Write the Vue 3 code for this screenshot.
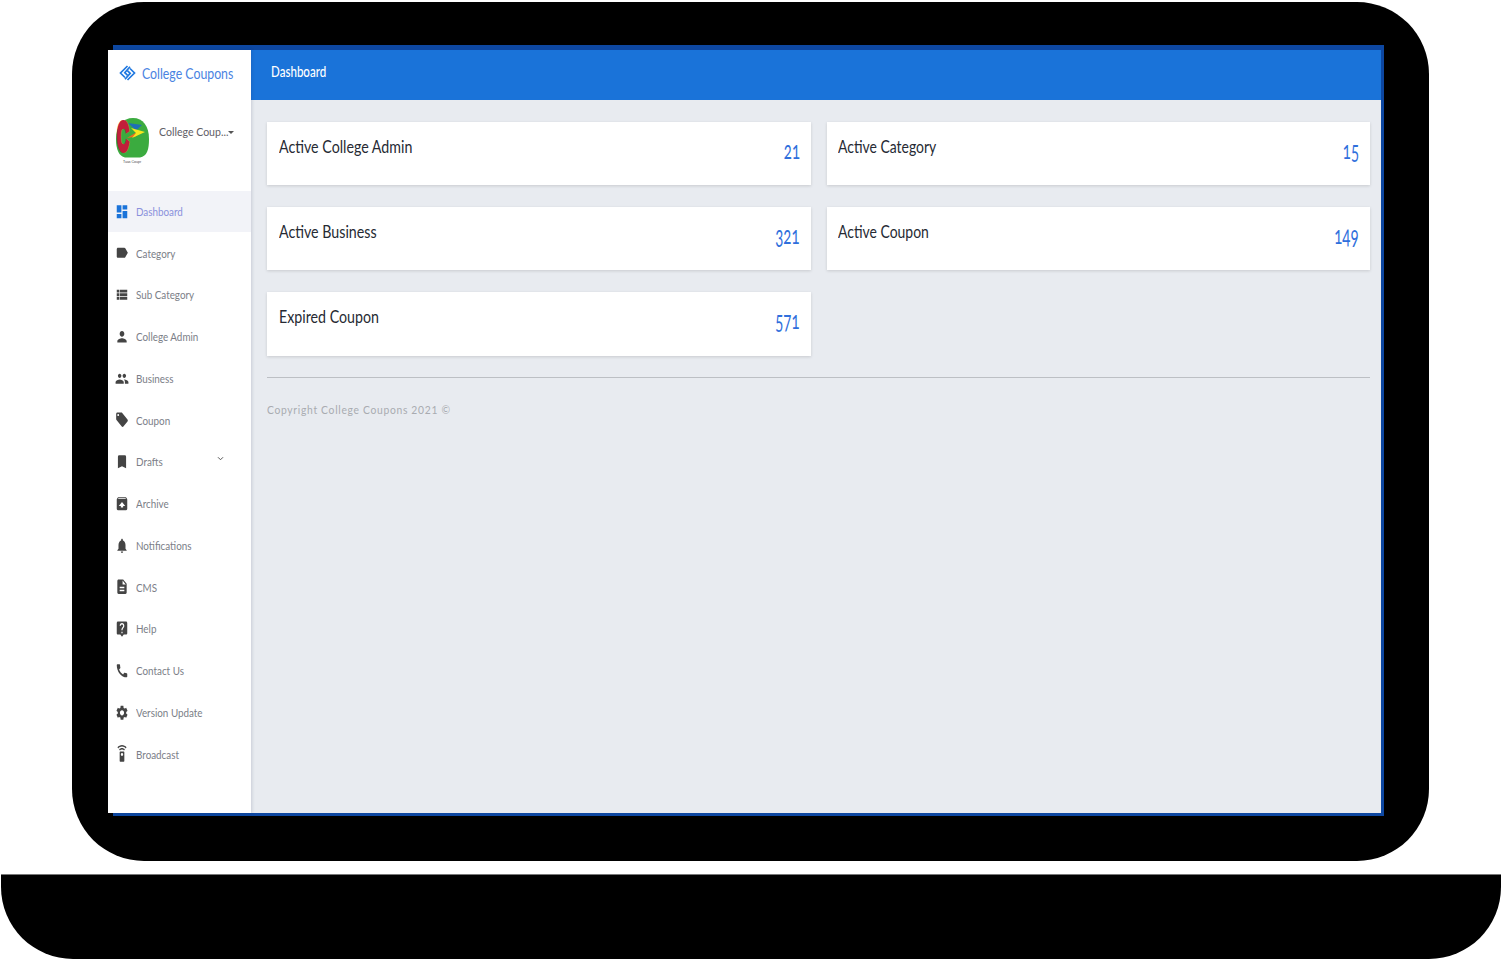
<script setup>
const menu = [
  { label: 'Dashboard', active: true, d: 'M3 13h8V3H3v10zm0 8h8v-6H3v6zm10 0h8V11h-8v10zm0-18v6h8V3h-8z' },
  { label: 'Category', d: 'M17.63 5.84C17.27 5.33 16.67 5 16 5L5 5.01C3.9 5.01 3 5.9 3 7v10c0 1.1.9 1.99 2 1.99L16 19c.67 0 1.27-.33 1.63-.84L22 12l-4.37-6.16z' },
  { label: 'Sub Category', d: 'M3 14h4v-4H3v4zm0 5h4v-4H3v4zM3 9h4V5H3v4zm5 5h13v-4H8v4zm0 5h13v-4H8v4zM8 5v4h13V5H8z' },
  { label: 'College Admin', d: 'M12 12c2.21 0 4-1.79 4-4s-1.79-4-4-4-4 1.79-4 4 1.79 4 4 4zm0 2c-2.67 0-8 1.34-8 4v2h16v-2c0-2.66-5.33-4-8-4z' },
  { label: 'Business', d: 'M16 11c1.66 0 2.99-1.34 2.99-3S17.66 5 16 5c-1.66 0-3 1.34-3 3s1.34 3 3 3zm-8 0c1.66 0 2.99-1.34 2.99-3S9.66 5 8 5C6.34 5 5 6.34 5 8s1.34 3 3 3zm0 2c-2.33 0-7 1.17-7 3.5V19h14v-2.5c0-2.33-4.67-3.5-7-3.5zm8 0c-.29 0-.62.02-.97.05 1.16.84 1.97 1.97 1.97 3.45V19h6v-2.5c0-2.33-4.67-3.5-7-3.5z' },
  { label: 'Coupon', d: 'M21.41 11.58l-9-9C12.05 2.22 11.55 2 11 2H4c-1.1 0-2 .9-2 2v7c0 .55.22 1.05.59 1.42l9 9c.36.36.86.58 1.41.58.55 0 1.05-.22 1.41-.59l7-7c.37-.36.59-.86.59-1.41 0-.55-.23-1.06-.59-1.42zM5.5 7C4.67 7 4 6.33 4 5.5S4.67 4 5.5 4 7 4.67 7 5.5 6.33 7 5.5 7z' },
  { label: 'Drafts', chevron: true, d: 'M17 3H7c-1.1 0-1.99.9-1.99 2L5 21l7-3 7 3V5c0-1.1-.9-2-2-2z' },
  { label: 'Archive', d: 'M20.55 5.22l-1.39-1.68C18.88 3.21 18.47 3 18 3H6c-.47 0-.88.21-1.15.55L3.46 5.22C3.17 5.57 3 6.01 3 6.5V19c0 1.1.89 2 2 2h14c1.1 0 2-.9 2-2V6.5c0-.49-.17-.93-.45-1.28zM12 9.5l5.5 5.5H14v2h-4v-2H6.5L12 9.5zM5.12 5l.82-1h12l.93 1H5.12z' },
  { label: 'Notifications', d: 'M12 22c1.1 0 2-.9 2-2h-4c0 1.1.89 2 2 2zm6-6v-5c0-3.07-1.64-5.64-4.5-6.32V4c0-.83-.67-1.5-1.5-1.5s-1.5.67-1.5 1.5v.68C7.63 5.36 6 7.92 6 11v5l-2 2v1h16v-1l-2-2z' },
  { label: 'CMS', d: 'M14 2H6c-1.1 0-1.99.9-1.99 2L4 20c0 1.1.89 2 1.99 2H18c1.1 0 2-.9 2-2V8l-6-6zm2 16H8v-2h8v2zm0-4H8v-2h8v2zm-3-5V3.5L18.5 9H13z' },
  { label: 'Help', d: 'M19 2H5c-1.11 0-2 .9-2 2v14c0 1.1.89 2 2 2h4l3 3 3-3h4c1.1 0 2-.9 2-2V4c0-1.1-.9-2-2-2zm-6 16h-2v-2h2v2zm2.07-7.75l-.9.92C13.45 11.9 13 12.5 13 14h-2v-.5c0-1.1.45-2.1 1.17-2.83l1.24-1.26c.37-.36.59-.86.59-1.41 0-1.1-.9-2-2-2s-2 .9-2 2H8c0-2.21 1.79-4 4-4s4 1.79 4 4c0 .88-.36 1.68-.93 2.25z' },
  { label: 'Contact Us', d: 'M20.01 15.38c-1.23 0-2.42-.2-3.53-.56-.35-.12-.74-.03-1.01.24l-1.57 1.97c-2.83-1.35-5.48-3.9-6.89-6.83l1.95-1.66c.27-.28.35-.67.24-1.02-.37-1.11-.56-2.3-.56-3.53 0-.54-.45-.99-.99-.99H4.19C3.65 3 3 3.24 3 3.99 3 13.28 10.73 21 20.01 21c.71 0 .99-.63.99-1.18v-3.45c0-.54-.45-.99-.99-.99z' },
  { label: 'Version Update', d: 'M19.14 12.94c.04-.3.06-.61.06-.94 0-.32-.02-.64-.07-.94l2.03-1.58c.18-.14.23-.41.12-.61l-1.92-3.32c-.12-.22-.37-.29-.59-.22l-2.39.96c-.5-.38-1.03-.7-1.62-.94l-.36-2.54c-.04-.24-.24-.41-.48-.41h-3.84c-.24 0-.43.17-.47.41l-.36 2.54c-.59.24-1.13.57-1.62.94l-2.39-.96c-.22-.08-.47 0-.59.22L2.74 8.87c-.12.21-.08.47.12.61l2.03 1.58c-.05.3-.09.63-.09.94s.02.64.07.94l-2.03 1.58c-.18.14-.23.41-.12.61l1.92 3.32c.12.22.37.29.59.22l2.39-.96c.5.38 1.03.7 1.62.94l.36 2.54c.05.24.24.41.48.41h3.84c.24 0 .44-.17.47-.41l.36-2.54c.59-.24 1.13-.56 1.62-.94l2.39.96c.22.08.47 0 .59-.22l1.92-3.32c.12-.22.07-.47-.12-.61l-2.01-1.58zM12 15.6c-1.98 0-3.6-1.62-3.6-3.6s1.62-3.6 3.6-3.6 3.6 1.62 3.6 3.6-1.62 3.6-3.6 3.6z' },
  { label: 'Broadcast', d: 'M15 9H9c-.55 0-1 .45-1 1v12c0 .55.45 1 1 1h6c.55 0 1-.45 1-1V10c0-.55-.45-1-1-1zm-3 6c-1.1 0-2-.9-2-2s.9-2 2-2 2 .9 2 2-.9 2-2 2zM7.05 6.05l1.41 1.41C9.37 6.56 10.62 6 12 6s2.63.56 3.54 1.46l1.41-1.41C15.68 4.78 13.93 4 12 4s-3.68.78-4.95 2.05zM12 0C8.96 0 6.21 1.23 4.22 3.22l1.41 1.41C7.26 3.01 9.51 2 12 2s4.74 1.01 6.36 2.64l1.41-1.41C17.79 1.23 15.04 0 12 0z' }
]
const cards = [
  { title: 'Active College Admin', value: '21' },
  { title: 'Active Category', value: '15' },
  { title: 'Active Business', value: '321' },
  { title: 'Active Coupon', value: '149' },
  { title: 'Expired Coupon', value: '571' }
]
</script>

<template>
  <div class="page">
    <div class="laptop">
      <div class="screen">
        <div class="strip"></div>
        <div class="body">
          <aside class="sidebar">
            <div class="brand">
              <svg class="brand-icon" viewBox="0 0 17 16">
                <path d="M8.5 1L1.5 8L6 12.5M8.5 15L15.5 8L11 3.5M11 1.8L5.8 7.6L8.4 10.2M6 14.2L11.2 8.4L8.6 5.8" fill="none" stroke="#1f78e0" stroke-width="1.7" />
              </svg>
              <span class="squeeze brand-name">College Coupons</span>
            </div>
            <div class="user">
              <svg class="avatar" viewBox="0 -6 34 52">
                <path d="M17 0C27 0 33 8 33 21C33 32 31 38 24 39.5H9C3 38 0 32 0 21C0 8 7 0 17 0Z" fill="#3bab3f" />
                <path d="M12 5L26 7L20 12.5Z" fill="#1f6fb5" />
                <path d="M11 20L21 14L20 18.5Z" fill="#ef6a22" />
                <path d="M15 10L29 14L16 20L20 15Z" fill="#f6e71d" />
                <text x="1.6" y="22" transform="scale(0.6 1.5)" class="avatar-c">C</text>
                <text x="16" y="44.5" text-anchor="middle" class="avatar-note">Tuas Coupr</text>
              </svg>
              <span class="squeeze user-name">College Coup...</span>
              <span class="caret"></span>
            </div>
            <nav class="menu">
              <div v-for="item in menu" :key="item.label" class="item" :class="{ active: item.active }">
                <svg class="icon" viewBox="0 0 24 24" preserveAspectRatio="none"><path :d="item.d" /></svg>
                <span class="squeeze label">{{ item.label }}</span>
                <svg v-if="item.chevron" class="chevron" viewBox="0 0 8 6"><path d="M1 1.5L4 4.5L7 1.5" fill="none" stroke="#555" stroke-width="1.2" /></svg>
              </div>
            </nav>
          </aside>
          <main class="main">
            <header class="header"><span class="squeeze header-title">Dashboard</span></header>
            <section class="content">
              <div class="cards">
                <div v-for="card in cards" :key="card.title" class="card">
                  <span class="squeeze card-title">{{ card.title }}</span>
                  <span class="card-value">{{ card.value }}</span>
                </div>
              </div>
              <hr class="rule" />
              <p class="squeeze copyright">Copyright College Coupons 2021 ©</p>
            </section>
          </main>
        </div>
        <div class="strip bottom"></div>
      </div>
    </div>
    <div class="base"></div>
  </div>
</template>

<style scoped>
.page {
  width: 1501px;
  height: 960px;
  box-sizing: border-box;
  padding-top: 2px;
  display: flex;
  flex-direction: column;
  background: #fff;
  font-family: "Lato", "Liberation Sans", sans-serif;
  overflow: hidden;
}
.laptop {
  height: 859px;
  box-sizing: border-box;
  margin: 0 72px;
  padding: 43px 45px 45px 36px;
  background: #000;
  border-radius: 72px;
}
.screen {
  height: 771px;
  display: flex;
  flex-direction: column;
}
.strip {
  height: 5px;
  margin-left: 5px;
  background: #0d47a1;
}
.strip.bottom {
  height: 3px;
}
.body {
  flex: 1;
  min-height: 0;
  display: flex;
}
.squeeze {
  display: inline-block;
  white-space: nowrap;
  transform-origin: left center;
}
.sidebar {
  width: 143px;
  flex: none;
  background: #fff;
  box-shadow: 1px 0 3px rgba(30, 40, 80, 0.16);
  position: relative;
  z-index: 1;
}
.brand {
  height: 46px;
  padding-bottom: 4px;
  display: flex;
  align-items: center;
  padding-left: 11px;
}
.brand-icon {
  width: 17px;
  height: 16px;
  flex: none;
}
.brand-name {
  margin-left: 6px;
  font-size: 15px;
  color: #4a83e2;
  transform: scaleX(0.82);
}
.user {
  height: 90.5px;
  display: flex;
  align-items: flex-start;
  padding-left: 8px;
  box-sizing: border-box;
  padding-top: 12px;
}
.avatar {
  width: 34px;
  height: 52px;
  flex: none;
}
.avatar-c {
  font: 700 27.8px "Liberation Sans", sans-serif;
  fill: #c21f3a;
  stroke: #c21f3a;
  stroke-width: 2.6;
}
.avatar-note {
  font: 3.5px "Liberation Sans", sans-serif;
  fill: #444;
}
.user-name {
  margin-left: 9px;
  margin-top: 13px;
  width: 69px;
  font-size: 12px;
  line-height: 14px;
  color: #5f6066;
  transform: scaleX(0.88);
}
.caret {
  margin-top: 19px;
  width: 0;
  height: 0;
  border-left: 3px solid transparent;
  border-right: 3px solid transparent;
  border-top: 3px solid #555;
}
.item {
  height: 41.75px;
  display: flex;
  align-items: center;
  padding-left: 7px;
}
.item.active {
  background: #f2f3f8;
}
.icon {
  width: 14px;
  height: 17.5px;
  flex: none;
  fill: #444;
}
.item.active .icon {
  fill: #1a73d9;
}
.label {
  margin-left: 7px;
  font-size: 12px;
  color: #7b7e87;
  transform: scaleX(0.82);
}
.item.active .label {
  color: #8a90dc;
}
.chevron {
  position: absolute;
  left: 109px;
  margin-top: -6px;
  width: 7px;
  height: 5px;
}
.main {
  flex: 1;
  min-width: 0;
  display: flex;
  flex-direction: column;
  border-right: 3px solid #0d47a1;
  background: #e8ebf0;
}
.header {
  height: 50px;
  flex: none;
  display: flex;
  align-items: center;
  padding: 0 0 8px 20px;
  box-sizing: border-box;
  background: #1a73d9;
}
.header-title {
  font-size: 15px;
  font-weight: 500;
  color: #fff;
  transform: scaleX(0.77);
}
.content {
  padding: 22px 11px 0 16px;
}
.cards {
  display: grid;
  grid-template-columns: 544px 543px;
  column-gap: 16px;
  row-gap: 22px;
}
.card {
  height: 63px;
  box-sizing: border-box;
  padding: 13px 11px 0 11.5px;
  background: #fff;
  box-shadow: 0 1px 3px rgba(0, 0, 0, 0.14);
  display: flex;
  justify-content: space-between;
}
.card:nth-child(even) {
  padding-left: 10.5px;
}
.card:nth-child(even) .card-title {
  transform: scaleX(0.775);
}
.card:nth-child(5) {
  height: 64px;
}
.card-title {
  font-size: 18px;
  line-height: 22px;
  color: #262a33;
  transform: scaleX(0.79);
}
.card-value {
  margin-top: 2px;
  font-size: 25px;
  line-height: 24px;
  color: #2f6fdc;
  font-variant-numeric: oldstyle-nums;
  transform: scaleX(0.6);
  transform-origin: right center;
}
.rule {
  margin: 21px 0 0;
  border: 0;
  border-top: 1px solid #bcbfc4;
}
.copyright {
  margin: 24px 0 0;
  font-size: 12px;
  line-height: 15px;
  letter-spacing: 0.8px;
  color: #a9abb0;
  transform: scaleX(0.86);
}
.base {
  height: 85px;
  flex: none;
  box-sizing: border-box;
  margin: 13px 0 0 1px;
  background: #000;
  border-top: 1px solid #777;
  border-radius: 0 0 72px 72px;
}
</style>

<style>
html, body {
  margin: 0;
  overflow: hidden;
  background: #fff;
}
</style>
